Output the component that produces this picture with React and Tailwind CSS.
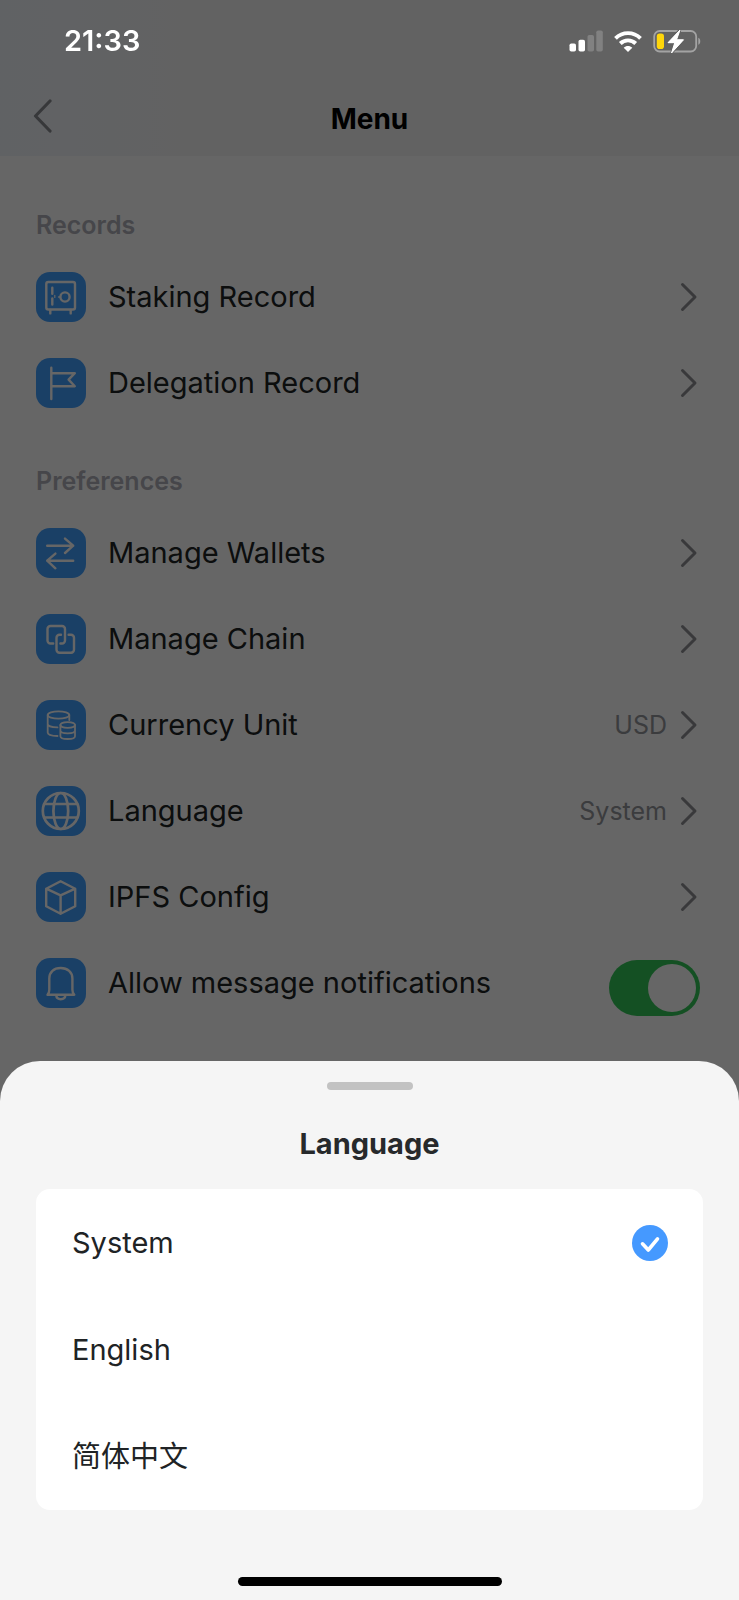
import { useState } from 'react';

const icons = {
    safe: (
        <>
            <rect x="10.3" y="10" width="28.7" height="27.5" rx="2" />
            <path d="M14.3 38v3.4M34.7 38v3.4" />
            <path d="M16.3 15.8v6M16.3 26.5v6" strokeWidth="2.4" />
            <path d="M18.8 23.4v2" strokeWidth="1.2" />
            <circle cx="29" cy="25" r="4.6" strokeWidth="2.4" />
            <path d="M22.6 25h1.4" strokeWidth="1.6" />
        </>
    ),
    flag: <path d="M15.3 9.8V41M15.3 15.2h23.5L32.6 21.6 38.8 28.2H15.3" />,
    arrows: (
        <path d="M11.2 17.7h26M29 10.6l8.2 7.1-8.2 7.3M37.2 32.7h-26M19.4 25.6l-8.2 7.1 8.2 7.6" />
    ),
    chain: (
        <>
            <path d="M17.2 29.5h-2.7a3 3 0 0 1-3-3V15a3 3 0 0 1 3-3H26a3 3 0 0 1 3 3v11.5a3 3 0 0 1-3 3h-1.6" />
            <path d="M32.6 20.7H35a3 3 0 0 1 3 3v12a3 3 0 0 1-3 3H23.5a3 3 0 0 1-3-3v-12a3 3 0 0 1 3-3H25" />
        </>
    ),
    coins: (
        <g strokeWidth="1.8">
            <ellipse cx="22.5" cy="15" rx="10.8" ry="3.7" />
            <path d="M11.7 15v17.5c0 2 4 3.4 9.8 3.5M33.3 15v5M11.7 24c0 1.8 4 3.3 9.8 3.4" />
            <ellipse cx="31.7" cy="25" rx="7.3" ry="2.9" />
            <path d="M24.4 25v11.2c0 3.7 14.6 3.7 14.6 0V25M24.4 30.6c0 3.7 14.6 3.7 14.6 0" />
        </g>
    ),
    globe: (
        <g strokeWidth="2.7">
            <circle cx="24.8" cy="25" r="18" />
            <ellipse cx="24.8" cy="25" rx="7.4" ry="18" />
            <path d="M8.5 18h32.6M8.5 31.5h32.6" />
        </g>
    ),
    cube: (
        <path d="M24.6 9.2 39.2 16.7V34.3L24.6 41.8 10.2 34.3V16.7zM10.2 16.7l14.4 6.6 14.6-6.6M24.6 23.3v18.5" />
    ),
    bell: (
        <path d="M11.5 36.8c1.6-1.6 1.8-3 1.8-5V20.5C13.3 14 17.8 10 24.7 10s11.7 4 11.7 10.5v11.300c0 2 .2 3.400 1.900 5zM20.200 37.200c.4 5.400 8.800 5.400 9.200 0" />
    ),
};

const records = [
    { icon: 'safe', label: 'Staking Record' },
    { icon: 'flag', label: 'Delegation Record' },
];

const preferences = [
    { icon: 'arrows', label: 'Manage Wallets' },
    { icon: 'chain', label: 'Manage Chain' },
    { icon: 'coins', label: 'Currency Unit', value: 'USD' },
    { icon: 'globe', label: 'Language', value: 'System' },
    { icon: 'cube', label: 'IPFS Config' },
];

const languages = ['System', 'English', '简体中文'];

function IconTile({ name }) {
    return (
        <span className="w-[50px] h-[50px] rounded-[14px] bg-[#42a0ff] shrink-0">
            <svg
                viewBox="0 0 50 50"
                className="w-full h-full"
                fill="none"
                stroke="white"
                strokeWidth="2.4"
                strokeLinecap="round"
                strokeLinejoin="round"
                aria-hidden="true"
            >
                {icons[name]}
            </svg>
        </span>
    );
}

function MenuRow({ icon, label, value }) {
    return (
        <button type="button" className="w-full h-[86px] flex items-center text-left">
            <IconTile name={icon} />
            <span className="ml-[22px] flex-1 text-[29px] leading-9 text-[#202325]">{label}</span>
            {value && <span className="text-[25px] leading-9 text-[#94969b]">{value}</span>}
            <svg viewBox="0 0 18 30" className="w-[18px] h-[30px] ml-[13px] mr-0.5" fill="none" aria-hidden="true">
                <path d="M2.5 2.5 15 15 2.5 27.5" stroke="#8f9094" strokeWidth="3" strokeLinecap="round" strokeLinejoin="round" />
            </svg>
        </button>
    );
}

function StatusBar() {
    return (
        <div className="absolute inset-x-0 top-0 z-20 h-[82px] pl-16 pr-[38px] flex items-center justify-between text-white">
            <span className="text-[29px] leading-9 font-semibold">21:33</span>
            <div className="flex items-center gap-[11px]">
                <svg viewBox="0 0 34 22" className="w-[34px] h-[22px]" fill="currentColor" aria-hidden="true">
                    <rect x="0.5" y="13.5" width="6.5" height="8" rx="1.8" />
                    <rect x="9.500" y="9.800" width="6.5" height="11.700" rx="1.8" />
                    <rect x="18.500" y="5" width="6.5" height="16.500" rx="1.8" opacity="0.2" />
                    <rect x="27.300" y="0.5" width="6.5" height="21" rx="1.8" opacity="0.2" />
                </svg>
                <svg viewBox="0 0 28 22" className="w-7 h-[22px]" fill="none" stroke="currentColor" strokeWidth="3.9" aria-hidden="true">
                    <path d="M1.5 8.3C8.500 1.400 19.500 1.400 26.500 8.300" />
                    <path d="M6.3 13.5c4.300-4.200 11.100-4.200 15.400 0" />
                    <path d="M14 22l-4.300-4.300c2.400-2.300 6.200-2.300 8.600 0z" fill="currentColor" stroke="none" />
                </svg>
                <svg viewBox="0 0 48 26" className="w-12 h-[26px]" aria-hidden="true">
                    <rect x="1.2" y="3" width="42" height="20.5" rx="5.5" fill="none" stroke="#a3a3a3" strokeWidth="1.800" />
                    <path d="M45.3 9.800c2.600.8 2.600 6.200 0 7z" fill="#a3a3a3" />
                    <rect x="3.8" y="5.500" width="7.2" height="15.500" rx="2.800" fill="#ffd60a" />
                    <path d="M27 2 15 14.700h6.800L18.500 25 30.500 11.800h-7z" fill="white" stroke="#626262" strokeWidth="2.600" paintOrder="stroke" />
                    <path d="M27 2 15 14.700h6.800L18.500 25 30.500 11.800h-7z" fill="white" stroke="white" strokeWidth="1" strokeLinejoin="round" />
                </svg>
            </div>
        </div>
    );
}

function LanguageSheet({ selected, onSelect }) {
    return (
        <section
            role="dialog"
            aria-label="Language"
            className="fixed inset-x-0 bottom-0 z-20 rounded-t-[40px] bg-[#f5f5f5] px-9 pt-[21px] pb-3.5 flex flex-col items-center"
        >
            <div className="w-[86px] h-2 rounded-full bg-[#c2c2c2]" />
            <h2 className="mt-9 text-[29px] leading-9 font-bold text-[#27292b]">Language</h2>
            <div className="mt-[27px] w-full rounded-[14px] bg-white">
                {languages.map((lang) => (
                    <label key={lang} className="h-[107px] pl-9 pr-[35px] flex items-center justify-between text-[29px] leading-9 text-[#202325]">
                        {lang}
                        <input
                            type="radio"
                            name="language"
                            checked={selected === lang}
                            onChange={() => onSelect(lang)}
                            className="peer sr-only"
                        />
                        <svg viewBox="0 0 36 36" className="w-9 h-9 hidden peer-checked:block" aria-hidden="true">
                            <circle cx="18" cy="18" r="18" fill="#4599ff" />
                            <path d="M10.5 18.8 16.300 25 25.500 13.800" fill="none" stroke="white" strokeWidth="3.6" strokeLinecap="round" strokeLinejoin="round" />
                        </svg>
                    </label>
                ))}
            </div>
            <div className="mt-[67px] w-[264px] h-[9px] rounded-full bg-black" />
        </section>
    );
}

export default function App() {
    const [language, setLanguage] = useState('System');
    const [notify, setNotify] = useState(true);

    return (
        <div className="relative min-h-screen bg-white font-['Inter','Noto_Sans_CJK_SC',sans-serif]">
            <StatusBar />

            <header className="h-[156px] pt-[82px] px-8 grid grid-cols-[1fr_auto_1fr] items-center bg-linear-to-r from-[#f1f4fb] to-[#f5f5f5] to-30%">
                <button type="button" aria-label="Back" className="w-5 h-9 mb-1.5">
                    <svg viewBox="0 0 20 36" className="w-5 h-9" fill="none" aria-hidden="true">
                        <path d="M18 3 3.500 18 18 33" stroke="#8a8c92" strokeWidth="3.2" strokeLinecap="round" strokeLinejoin="round" />
                    </svg>
                </button>
                <h1 className="text-[28px] leading-9 font-bold text-black">Menu</h1>
            </header>

            <main className="pl-9 pr-[39px] pt-[51px]">
                <h2 className="text-[25px] leading-9 font-semibold text-[#aeb0b8]">Records</h2>
                <div className="mt-[11px]">
                    {records.map((r) => (
                        <MenuRow key={r.label} {...r} />
                    ))}
                </div>

                <h2 className="mt-[37px] text-[25px] leading-9 font-semibold text-[#aeb0b8]">Preferences</h2>
                <div className="mt-[11px]">
                    {preferences.map((p) => (
                        <MenuRow key={p.label} {...p} />
                    ))}
                    <label className="h-[86px] flex items-center">
                        <IconTile name="bell" />
                        <span className="ml-[22px] flex-1 text-[29px] leading-9 text-[#202325]">
                            Allow message notifications
                        </span>
                        <input
                            type="checkbox"
                            role="switch"
                            checked={notify}
                            onChange={() => setNotify(!notify)}
                            className="peer sr-only"
                        />
                        <span className="mt-2.5 w-[91px] h-14 p-1 rounded-full bg-gray-300 peer-checked:bg-[#34c759] flex peer-checked:justify-end">
                            <span className="w-12 h-12 rounded-full bg-white" />
                        </span>
                    </label>
                </div>
            </main>

            {/* Backdrop */}
            <div className="fixed inset-0 z-10 bg-black/60" />

            <LanguageSheet selected={language} onSelect={setLanguage} />
        </div>
    );
}
